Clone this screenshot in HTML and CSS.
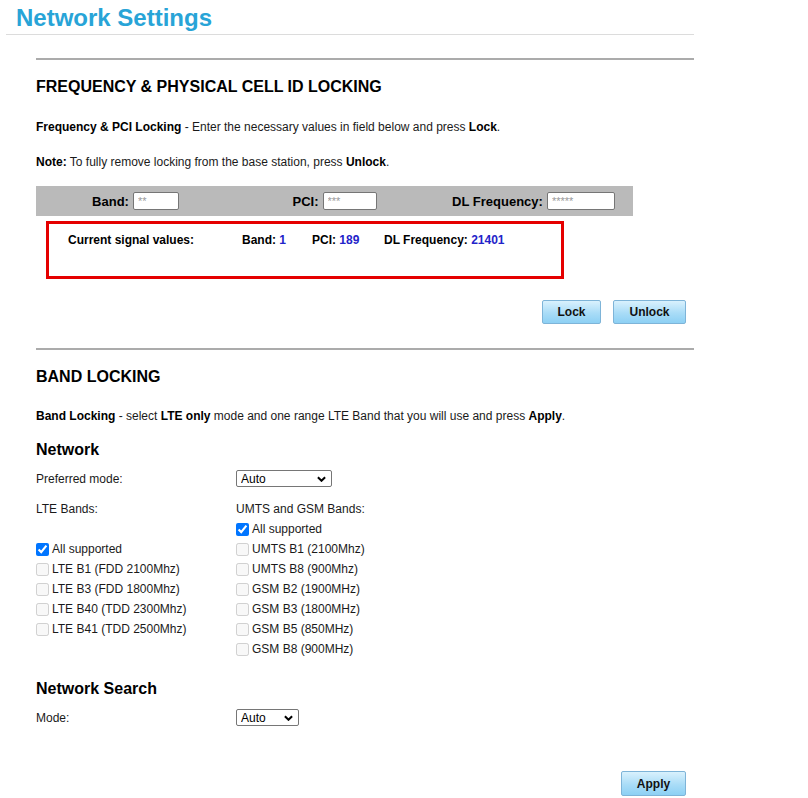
FILE: index.html
```html
<!DOCTYPE html>
<html lang="en">
<head>
  <meta charset="UTF-8">
  <title>Network Settings</title>
  <link rel="stylesheet" href="styles.css">
</head>
<body>
  <div class="page">
    <h1>Network Settings</h1>

    <div class="section">
      <div class="rule"></div>
      <h2>FREQUENCY &amp; PHYSICAL CELL ID LOCKING</h2>
      <p class="intro"><b>Frequency &amp; PCI Locking</b> - Enter the necessary values in field below and press <b>Lock</b>.</p>
      <p class="note"><b>Note:</b> To fully remove locking from the base station, press <b>Unlock</b>.</p>

      <div class="lockbar">
        <div class="lock-cell">
          <label>Band:</label>
          <input type="text" class="in-band" placeholder="**">
        </div>
        <div class="lock-cell">
          <label>PCI:</label>
          <input type="text" class="in-pci" placeholder="***">
        </div>
        <div class="lock-cell">
          <label>DL Frequency:</label>
          <input type="text" class="in-freq" placeholder="*****">
        </div>
      </div>

      <div class="signal">
        <span class="sig-title">Current signal values:</span>
        <span class="sig-band">Band: <span class="val">1</span></span>
        <span class="sig-pci">PCI: <span class="val">189</span></span>
        <span class="sig-freq">DL Frequency: <span class="val">21401</span></span>
      </div>

      <div class="actions">
        <button class="btn btn-lock">Lock</button>
        <button class="btn btn-unlock">Unlock</button>
      </div>

      <div class="rule rule-band"></div>
      <h2 class="band-title">BAND LOCKING</h2>
      <p class="band-intro"><b>Band Locking</b> - select <b>LTE only</b> mode and one range LTE Band that you will use and press <b>Apply</b>.</p>

      <h3>Network</h3>
      <div class="field">
        <span class="field-label">Preferred mode:</span>
        <span class="select-wrap">
          <select class="sel-mode">
            <option>Auto</option>
            <option>LTE only</option>
            <option>WCDMA only</option>
            <option>GSM only</option>
          </select>
          <svg class="chevron" viewBox="0 0 10 6" width="9" height="6"><polyline points="1,1 5,5 9,1" fill="none" stroke="#000" stroke-width="2.2"/></svg>
        </span>
      </div>

      <div class="bands">
        <div class="band-col band-col-lte">
          <div class="band-row">LTE Bands:</div>
          <div class="band-row"></div>
          <label class="band-row"><input type="checkbox" checked>All supported</label>
          <label class="band-row"><input type="checkbox" disabled>LTE B1 (FDD 2100Mhz)</label>
          <label class="band-row"><input type="checkbox" disabled>LTE B3 (FDD 1800Mhz)</label>
          <label class="band-row"><input type="checkbox" disabled>LTE B40 (TDD 2300Mhz)</label>
          <label class="band-row"><input type="checkbox" disabled>LTE B41 (TDD 2500Mhz)</label>
        </div>
        <div class="band-col">
          <div class="band-row">UMTS and GSM Bands:</div>
          <label class="band-row"><input type="checkbox" checked>All supported</label>
          <label class="band-row"><input type="checkbox" disabled>UMTS B1 (2100Mhz)</label>
          <label class="band-row"><input type="checkbox" disabled>UMTS B8 (900Mhz)</label>
          <label class="band-row"><input type="checkbox" disabled>GSM B2 (1900MHz)</label>
          <label class="band-row"><input type="checkbox" disabled>GSM B3 (1800MHz)</label>
          <label class="band-row"><input type="checkbox" disabled>GSM B5 (850MHz)</label>
          <label class="band-row"><input type="checkbox" disabled>GSM B8 (900MHz)</label>
        </div>
      </div>

      <h3 class="search-title">Network Search</h3>
      <div class="field">
        <span class="field-label">Mode:</span>
        <span class="select-wrap">
          <select class="sel-search">
            <option>Auto</option>
            <option>Manual</option>
          </select>
          <svg class="chevron" viewBox="0 0 10 6" width="9" height="6"><polyline points="1,1 5,5 9,1" fill="none" stroke="#000" stroke-width="2.2"/></svg>
        </span>
      </div>

      <div class="actions actions-apply">
        <button class="btn btn-apply">Apply</button>
      </div>
    </div>
  </div>
</body>
</html>
```

FILE: styles.css
```css
/* Basic page */
body {
  font-family: "Liberation Sans", Arial, sans-serif;
  font-size: 12px;
  color: #1a1a1a;
  background: #fff;
  margin: 0;
}
.page {
  margin-left: 6px;
  width: 688px;
}
h1 {
  margin: 0;
  padding: 4px 0 2px 10px;
  font-size: 24px;
  line-height: 28px;
  color: #28a4d7;
  border-bottom: 1px solid #dcdcdc;
}
.section {
  padding-left: 30px;
}
.rule {
  margin-top: 23px;
  border-top: 2px solid #ababab;
}
h2 {
  margin: 17px 0 0;
  font-size: 16px;
  line-height: 20px;
  color: #000;
}
h3 {
  margin: 17px 0 0;
  font-size: 16px;
  line-height: 20px;
  color: #000;
}
p {
  margin: 0;
  line-height: 14px;
}
b {
  color: #000;
}
.intro {
  margin-top: 23px;
}
.note {
  margin-top: 21px;
}

/* Frequency / PCI inputs */
.lockbar {
  margin-top: 17px;
  width: 597px;
  height: 30px;
  background: #bababa;
  display: flex;
}
.lock-cell {
  flex: 1;
  display: flex;
  justify-content: center;
  align-items: center;
  gap: 4px;
}
.lock-cell label {
  font-size: 13px;
  font-weight: bold;
  line-height: 15px;
  color: #000;
}
.lock-cell input {
  box-sizing: border-box;
  height: 18px;
  padding: 0 4px;
  border: 1px solid #767676;
  border-radius: 2px;
  font-family: "Liberation Sans", Arial, sans-serif;
  font-size: 11px;
  background: #fff;
}
.lock-cell input::placeholder {
  color: #9a9a9a;
}
.in-band { width: 46px; }
.in-pci { width: 54px; }
.in-freq { width: 68px; }

/* Current signal box */
.signal {
  box-sizing: border-box;
  margin: 5px 0 0 10px;
  width: 518px;
  height: 58px;
  border: 3px solid #e50000;
  padding: 9px 0 0 19px;
  display: flex;
  font-weight: bold;
  line-height: 14px;
  color: #000;
}
.sig-title { width: 174px; }
.sig-band { width: 70px; }
.sig-pci { width: 72px; }
.val {
  color: #2323c9;
}

/* Buttons */
.actions {
  margin-top: 21px;
  padding-right: 8px;
  display: flex;
  justify-content: flex-end;
  gap: 12px;
}
.btn {
  height: 24px;
  border: 1px solid #7eb4d8;
  border-radius: 2px;
  background: linear-gradient(#d9f1fd, #a9dcf7 55%, #8dd0f4);
  font-family: "Liberation Sans", Arial, sans-serif;
  font-size: 12px;
  font-weight: bold;
  color: #111;
  padding: 0;
}
.btn-lock { width: 59px; }
.btn-unlock { width: 73px; }
.actions-apply {
  margin-top: 45px;
}
.btn-apply {
  width: 65px;
  height: 25px;
}

/* Band locking */
.rule-band {
  margin-top: 24px;
}
.band-title {
  margin-top: 17px;
}
.band-intro {
  margin-top: 22px;
}
.field {
  margin-top: 10px;
  display: flex;
  align-items: center;
  height: 17px;
}
.field-label {
  width: 200px;
  line-height: 14px;
}
.select-wrap {
  position: relative;
  display: inline-block;
}
.select-wrap select {
  appearance: none;
  box-sizing: border-box;
  height: 17px;
  border: 1px solid #767676;
  border-radius: 2px;
  background: #fff;
  padding: 0 0 0 4px;
  font-family: "Liberation Sans", Arial, sans-serif;
  font-size: 12px;
  color: #000;
  display: block;
}
.sel-mode { width: 96px; }
.sel-search { width: 63px; }
.chevron {
  position: absolute;
  right: 6px;
  top: 6px;
  pointer-events: none;
}
.bands {
  margin-top: 12px;
  display: flex;
}
.band-col-lte {
  width: 200px;
}
.band-row {
  display: flex;
  align-items: center;
  height: 20px;
  line-height: 14px;
}
.band-row input {
  width: 13px;
  height: 13px;
  margin: 0 3px 0 0;
}
.search-title {
  margin-top: 20px;
}
```
